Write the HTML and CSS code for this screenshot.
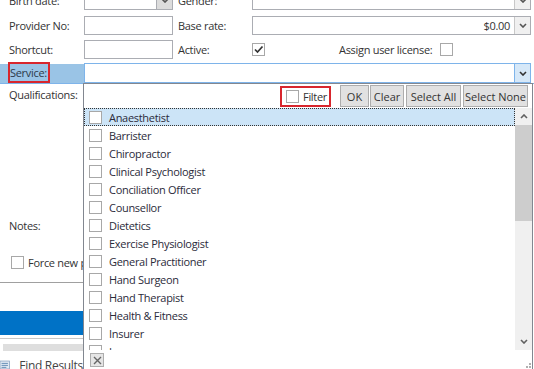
FILE: index.html
```html
<!DOCTYPE html>
<html lang="en">

<head>
    <meta charset="UTF-8">
    <title>Practitioner</title>
    <link rel="stylesheet" href="styles.css">
</head>

<body>
    <div class="screen">
        <div class="form">
            <div class="row">
                <span class="lbl">Birth date:</span>
                <div class="box short">
                    <span class="drop gray"><svg width="8" height="5" viewBox="0 0 8 5"><path d="M1 1 L4 4 L7 1" fill="none" stroke="#555" stroke-width="1.6"/></svg></span>
                </div>
                <span class="lbl2">Gender:</span>
                <div class="box long">
                    <span class="drop"><svg width="8" height="5" viewBox="0 0 8 5"><path d="M1 1 L4 4 L7 1" fill="none" stroke="#555" stroke-width="1.6"/></svg></span>
                </div>
            </div>
            <div class="row">
                <span class="lbl">Provider No:</span>
                <div class="box short"></div>
                <span class="lbl2">Base rate:</span>
                <div class="box long">
                    <span class="value">$0.00</span>
                    <span class="drop"><svg width="8" height="5" viewBox="0 0 8 5"><path d="M1 1 L4 4 L7 1" fill="none" stroke="#555" stroke-width="1.6"/></svg></span>
                </div>
            </div>
            <div class="row">
                <span class="lbl">Shortcut:</span>
                <div class="box short"></div>
                <span class="lbl2">Active:</span>
                <span class="check"><svg width="11" height="11" viewBox="0 0 11 11"><path d="M2 5.5 L4.5 8 L9.5 2.5" fill="none" stroke="#333" stroke-width="1.7"/></svg></span>
                <span class="assign">Assign user license:</span>
                <span class="check"></span>
            </div>
            <div class="row service">
                <span class="lbl svc"><span class="mark">Service:</span></span>
                <div class="box wide">
                    <span class="drop blue"><svg width="8" height="5" viewBox="0 0 8 5"><path d="M1 1 L4 4 L7 1" fill="none" stroke="#333" stroke-width="1.6"/></svg></span>
                </div>
            </div>
        </div>

        <div class="under">
            <div class="qual">Qualifications:</div>
            <div class="notes">Notes:</div>
            <div class="force"><span class="check"></span><span>Force new p</span></div>
            <div class="sep"></div>
            <div class="bluebar"></div>
            <div class="thin"></div>
            <div class="band"></div>
            <div class="tab">
                <svg width="13" height="12" viewBox="0 0 13 12"><rect x="0" y="1" width="12" height="10" fill="#dfe8f2" stroke="#8aa4c0"/><path d="M2 4 H10 M2 6.5 H10 M2 9 H8" stroke="#4a78a8"/></svg>
                <span>Find Results</span>
            </div>
        </div>

        <div class="popup">
            <div class="toolbar">
                <div class="filter"><span class="check"></span><span>Filter</span></div>
                <button class="btn ok">OK</button>
                <button class="btn clear">Clear</button>
                <button class="btn all">Select All</button>
                <button class="btn none">Select None</button>
            </div>
            <div class="list">
                <ul class="items">
                    <li class="selected"><span class="check"></span>Anaesthetist</li>
                    <li><span class="check"></span>Barrister</li>
                    <li><span class="check"></span>Chiropractor</li>
                    <li><span class="check"></span>Clinical Psychologist</li>
                    <li><span class="check"></span>Conciliation Officer</li>
                    <li><span class="check"></span>Counsellor</li>
                    <li><span class="check"></span>Dietetics</li>
                    <li><span class="check"></span>Exercise Physiologist</li>
                    <li><span class="check"></span>General Practitioner</li>
                    <li><span class="check"></span>Hand Surgeon</li>
                    <li><span class="check"></span>Hand Therapist</li>
                    <li><span class="check"></span>Health &amp; Fitness</li>
                    <li><span class="check"></span>Insurer</li>
                    <li><span class="check"></span>Lawyer</li>
                </ul>
                <div class="scroll">
                    <div class="arrow"><svg width="8" height="5" viewBox="0 0 8 5"><path d="M1 4 L4 1 L7 4" fill="none" stroke="#606060" stroke-width="1.6"/></svg></div>
                    <div class="thumb"></div>
                    <div class="track"></div>
                    <div class="arrow"><svg width="8" height="5" viewBox="0 0 8 5"><path d="M1 1 L4 4 L7 1" fill="none" stroke="#606060" stroke-width="1.6"/></svg></div>
                </div>
            </div>
            <div class="footer">
                <span class="close"><svg width="9" height="9" viewBox="0 0 9 9"><path d="M1 1 L8 8 M8 1 L1 8" stroke="#666" stroke-width="1.4"/></svg></span>
                <svg class="grip" width="7" height="7" viewBox="0 0 7 7"><g fill="#b0b0b0"><rect x="5" y="1" width="2" height="2"/><rect x="2" y="4" width="2" height="2"/><rect x="5" y="4" width="2" height="2"/></g></svg>
            </div>
        </div>
    </div>
</body>

</html>
```

FILE: styles.css
```css
* {
    box-sizing: border-box;
}

html,
body {
    margin: 0;
    background: #fff;
}

body {
    font-family: "Open Sans", "Noto Sans", sans-serif;
    font-size: 11px;
    letter-spacing: -0.3px;
    color: #333;
}

.screen {
    width: 534px;
    height: 369px;
    overflow: hidden;
    position: relative;
}

.form {
    margin-top: -9px;
}

.row {
    display: flex;
    align-items: center;
    height: 19px;
    margin-bottom: 5px;
}

.row:first-child {
    margin-bottom: 6px;
}

.lbl {
    width: 84px;
    padding-left: 9px;
    white-space: nowrap;
}

.lbl2 {
    width: 74px;
    margin-left: 5px;
    white-space: nowrap;
}

.box {
    height: 19px;
    border: 1px solid #abadb3;
    background: #fff;
    display: flex;
    align-items: stretch;
}

.box.short {
    width: 89px;
}

.box.long {
    width: 279px;
}

.box.wide {
    width: 447px;
    height: 20px;
    border-color: #7eb4ea;
}

.value {
    margin-left: auto;
    padding-right: 4px;
    line-height: 17px;
}

.drop {
    width: 16px;
    margin-left: auto;
    background: #f0f0f0;
    border-left: 1px solid #c8c8c8;
    display: flex;
    align-items: center;
    justify-content: center;
}

.value + .drop {
    margin-left: 0;
}

.drop.gray {
    background: #dcdcdc;
    border-left-color: #abadb3;
}

.drop.blue {
    background: #d6e8f8;
    border-left-color: #7eb4ea;
}

.check {
    display: inline-flex;
    align-items: center;
    justify-content: center;
    width: 13px;
    height: 13px;
    border: 1px solid #a8a8a8;
    background: #fff;
    flex-shrink: 0;
}

.assign {
    margin-left: 74px;
    margin-right: 8px;
}

.row.service {
    height: 21px;
    margin-bottom: 0;
    margin-top: -1px;
    align-items: flex-end;
    background: linear-gradient(#9ac4e6, #9ac4e6) no-repeat 0 1px / 84px 20px;
    border-bottom: 1px solid #7eb4ea;
}

.lbl.svc {
    padding-left: 8px;
    height: 21px;
}

.mark {
    display: inline-block;
    height: 21px;
    line-height: 17px;
    border: 2px solid #d8262d;
    padding: 0 1px 0 0;
    color: #2d3a4a;
}

/* content that sits under the dropdown */
.under {
    width: 83px;
    overflow: hidden;
    display: flex;
    flex-direction: column;
}

.qual {
    padding-left: 9px;
    margin-top: 3px;
    line-height: 16px;
    white-space: nowrap;
}

.notes {
    padding-left: 9px;
    margin-top: 115px;
    line-height: 16px;
}

.force {
    display: flex;
    align-items: center;
    height: 16px;
    margin-top: 20px;
    padding-left: 11px;
    gap: 4px;
    white-space: nowrap;
    overflow: hidden;
}

.sep {
    height: 1px;
    margin-top: 12px;
    background: #a0a0a0;
}

.bluebar {
    height: 24px;
    margin-top: 28px;
    background: #0072c6;
}

.thin {
    height: 1px;
    margin-top: 3px;
    background: #c8c8c8;
}

.band {
    height: 7px;
    margin-top: 5px;
    margin-left: 3px;
    background: #dedede;
}

.tab {
    display: flex;
    align-items: center;
    gap: 9px;
    height: 18px;
    margin-top: 2px;
    padding-top: 6px;
    font-size: 12px;
    color: #444;
    white-space: nowrap;
    overflow: hidden;
}

/* dropdown popup */
.popup {
    position: absolute;
    left: 83px;
    top: 83px;
    width: 450px;
    height: 290px;
    background: #fff;
    border: 1px solid #828790;
    border-bottom: none;
    display: flex;
    flex-direction: column;
}

.toolbar {
    height: 24px;
    display: flex;
    align-items: center;
    justify-content: flex-end;
    gap: 1px;
    padding-right: 4px;
}

.filter {
    display: flex;
    align-items: center;
    gap: 4px;
    width: 51px;
    height: 21px;
    border: 2px solid #d8262d;
    padding-left: 4px;
    margin-right: 8px;
}

.btn {
    height: 22px;
    padding: 0;
    font: inherit;
    color: #333;
    background: #e1e1e1;
    border: 1px solid #adadad;
}

.btn.ok {
    width: 29px;
}

.btn.clear {
    width: 34px;
}

.btn.all {
    width: 55px;
    margin-left: 1px;
}

.btn.none {
    width: 65px;
    margin-left: 1px;
}

.list {
    display: flex;
    height: 242px;
}

.items {
    flex: 1;
    list-style: none;
    margin: 0;
    padding: 0;
    overflow: hidden;
}

.items li {
    display: flex;
    align-items: center;
    gap: 7px;
    height: 18px;
    padding-left: 5px;
    white-space: nowrap;
    color: #2b2b3a;
}

.items li.selected {
    background: #cce4f7;
    outline: 1px dotted #333;
    outline-offset: -1px;
}

.scroll {
    width: 17px;
    background: #f0f0f0;
    display: flex;
    flex-direction: column;
}

.arrow {
    height: 17px;
    display: flex;
    align-items: center;
    justify-content: center;
}

.thumb {
    height: 96px;
    background: #cdcdcd;
}

.track {
    flex: 1;
}

.footer {
    flex: 1;
    display: flex;
    align-items: flex-start;
    justify-content: space-between;
    padding: 3px 1px 0 6px;
}

.close {
    display: flex;
    align-items: center;
    justify-content: center;
    width: 14px;
    height: 14px;
    background: #e5e5e5;
    border: 1px solid #adadad;
}

.grip {
    margin-top: 9px;
}
```
